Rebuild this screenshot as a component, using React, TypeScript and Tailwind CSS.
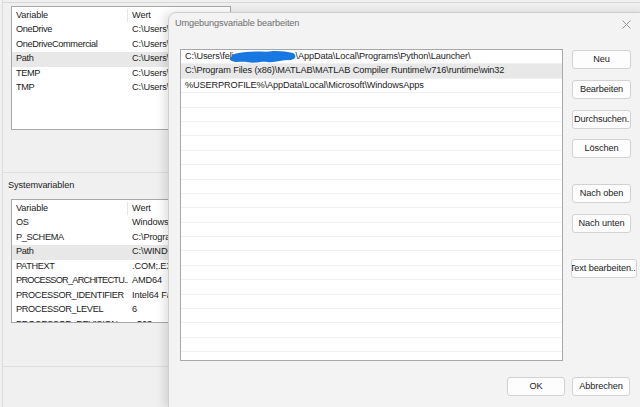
const userVars = [
  { name: "OneDrive", value: "C:\\Users\\feli\\OneDrive" },
  { name: "OneDriveCommercial", value: "C:\\Users\\feli\\OneDrive" },
  { name: "Path", value: "C:\\Users\\feli\\AppData", selected: true },
  { name: "TEMP", value: "C:\\Users\\feli\\AppData" },
  { name: "TMP", value: "C:\\Users\\feli\\AppData" },
];

const sysVars = [
  { name: "OS", value: "Windows_NT" },
  { name: "P_SCHEMA", value: "C:\\Program Files" },
  { name: "Path", value: "C:\\WINDOWS\\system32", selected: true },
  { name: "PATHEXT", value: ".COM;.EXE;.BAT" },
  { name: "PROCESSOR_ARCHITECTU...", value: "AMD64", tight: true },
  { name: "PROCESSOR_IDENTIFIER", value: "Intel64 Family" },
  { name: "PROCESSOR_LEVEL", value: "6" },
  { name: "PROCESSOR_REVISION", value: "a503" },
];

const paths = [
  "C:\\Program Files (x86)\\MATLAB\\MATLAB Compiler Runtime\\v716\\runtime\\win32",
  "%USERPROFILE%\\AppData\\Local\\Microsoft\\WindowsApps",
];

const buttons = [
  { label: "Neu", top: "mt-[1px]" },
  { label: "Bearbeiten", top: "mt-[11px]" },
  { label: "Durchsuchen...", top: "mt-[11px]", left: true },
  { label: "Löschen", top: "mt-[10px]" },
  { label: "Nach oben", top: "mt-[26px]" },
  { label: "Nach unten", top: "mt-[11px]" },
  { label: "Text bearbeiten...", top: "mt-[26px]", wide: true },
];

type Row = { name: string; value: string; selected?: boolean; tight?: boolean };

function VarList({ rows, className }: { rows: Row[]; className: string }) {
  return (
    <div className={`bg-white border border-[#a8a8a8] overflow-hidden ${className}`}>
      <div className="flex h-[15px] items-center mt-[1px]">
        <span className="w-[116px] pl-[4px] border-r border-[#e6e6e6]">Variable</span>
        <span className="pl-[4px]">Wert</span>
      </div>
      {rows.map((r) => (
        <div
          key={r.name}
          className={`flex h-[14.5px] items-center whitespace-nowrap ${r.selected ? "bg-[#e8e8e8]" : ""}`}
        >
          <span
            className={`w-[116px] pl-[4px] shrink-0 overflow-hidden ${r.tight ? "tracking-[-0.75px]" : "tracking-[-0.35px]"}`}
          >
            {r.name}
          </span>
          <span className="pl-[4px]">{r.value}</span>
        </div>
      ))}
    </div>
  );
}

function WinButton({ label, className }: { label: string; className: string }) {
  return (
    <button
      type="button"
      className={`h-[19px] bg-[#fdfdfd] border border-[#d2d2d2] rounded-[3px] flex items-center whitespace-nowrap overflow-hidden text-[#1b1b1b] ${className}`}
    >
      {label}
    </button>
  );
}

export default function App() {
  return (
    <div
      className="relative w-[640px] h-[407px] overflow-hidden bg-[#f0f0f0] text-[9.2px] tracking-[-0.12px] text-[#1b1b1b]"
      style={{ fontFamily: '"Liberation Sans", Arial, sans-serif' }}
    >
      {/* Background: Umgebungsvariablen window */}
      <div className="flex flex-col h-full border-l border-[#dcdcdc] ml-[2px]">
        <div className="h-[3px] border-b border-[#d8d8d8]" />
        <VarList rows={userVars} className="ml-[8px] mt-[3px] w-[220px] h-[124px]" />
        <div className="mt-[42px] border-b border-[#dedede]" />
        <div className="mt-[6px] ml-[5px] h-[14px] flex items-center">Systemvariablen</div>
        <VarList rows={sysVars} className="ml-[8px] mt-[6px] w-[220px] h-[124px]" />
        <div className="mt-[43px] border-b border-[#dedede]" />
      </div>

      {/* Dialog window */}
      <div className="absolute left-[168px] top-[12px] w-[480px] h-[396px] bg-[#f3f3f3] border border-[#cfcfcf] rounded-tl-[8px] shadow-[-4px_0_10px_rgba(0,0,0,0.12)] flex flex-col">
        <div className="h-[21px] flex items-center justify-between pl-[6px] pr-[16px] text-[#6d6d6d]">
          <span>Umgebungsvariable bearbeiten</span>
          <svg width="9" height="9" viewBox="0 0 9 9" className="mt-[1px]">
            <path d="M0.5 0.5L8.5 8.5M8.5 0.5L0.5 8.5" stroke="#8a8a8a" strokeWidth="0.9" />
          </svg>
        </div>

        <div className="flex mt-[15px] ml-[11px]">
          <div className="w-[383px] h-[312px] bg-white border border-[#a8a8a8] overflow-hidden">
            <div className="h-[14.4px] flex items-center pl-[4px] whitespace-nowrap border-b border-[#f1f1f1]">
              <span>C:\Users\feli</span>
              <span className="relative inline-block w-[62px] h-[10px]">
                <svg width="70" height="16" viewBox="0 0 70 16" className="absolute -left-[4px] -top-[3px]">
                  <path
                    d="M2 8 C8 4, 14 9, 20 6 C26 3, 30 7, 36 4 C42 1, 54 2, 64 4 C68 6, 67 11, 60 11 C52 11, 46 14, 38 13 C32 12, 26 15, 18 13 C12 12, 7 14, 3 12 C0 11, 0 9, 2 8 Z"
                    fill="#1877e0"
                  />
                  <path d="M6 8 C20 4, 40 5, 62 7" stroke="#1877e0" strokeWidth="6" fill="none" strokeLinecap="round" />
                </svg>
              </span>
              <span>\AppData\Local\Programs\Python\Launcher\</span>
            </div>
            {paths.map((p, i) => (
              <div
                key={p}
                className={`h-[14.4px] flex items-center pl-[4px] whitespace-nowrap border-b border-[#f1f1f1] ${i === 0 ? "bg-[#e8e8e8]" : ""}`}
              >
                {p}
              </div>
            ))}
            {Array.from({ length: 18 }).map((_, i) => (
              <div key={i} className="h-[14.4px] border-b border-[#f1f1f1]" />
            ))}
          </div>

          <div className="flex flex-col ml-[9px]">
            {buttons.map((b) => (
              <WinButton
                key={b.label}
                label={b.label}
                className={`${b.top} ${b.wide ? "w-[66px] -ml-[1px]" : "w-[59px]"} ${b.left ? "justify-start pl-[1px]" : "justify-center"}`}
              />
            ))}
          </div>
        </div>

        <div className="flex justify-end gap-[7px] mt-[16px] pr-[17px]">
          <WinButton label="OK" className="w-[58px] justify-center" />
          <WinButton label="Abbrechen" className="w-[58px] justify-center" />
        </div>

        <div className="absolute right-[2px] bottom-[2px] grid grid-cols-3 gap-[1px]">
          {[0, 0, 1, 0, 1, 1, 1, 1, 1].map((v, i) => (
            <span key={i} className={`w-[1px] h-[1px] ${v ? "bg-[#a0a0a0]" : ""}`} />
          ))}
        </div>
      </div>
    </div>
  );
}
